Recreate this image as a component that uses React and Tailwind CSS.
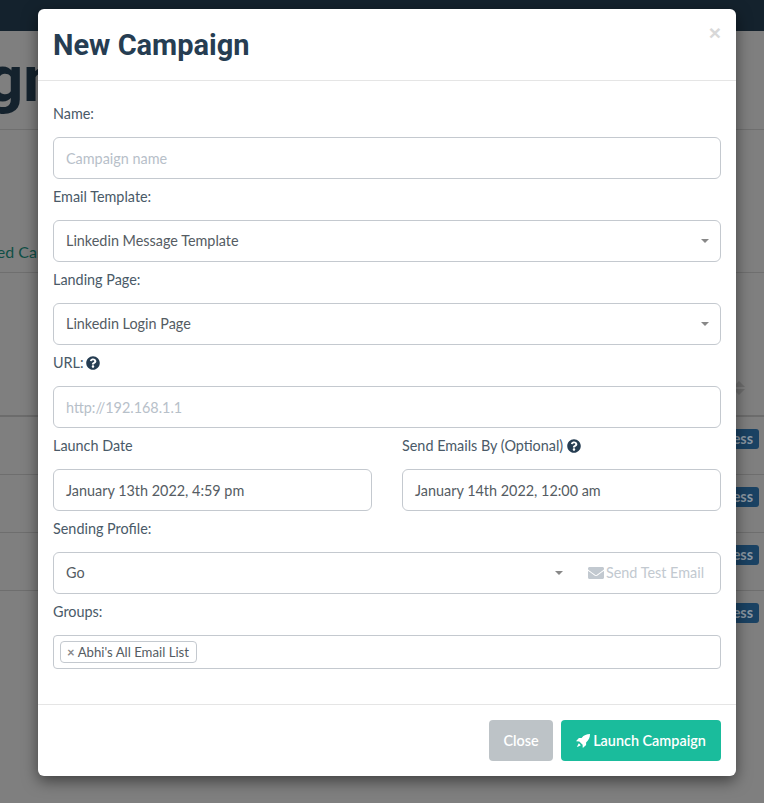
import React from "react";
import { FaEnvelope, FaQuestionCircle } from "react-icons/fa";

const font = "font-['Lato','Noto_Sans',sans-serif]";
const box = "h-[42px] w-full rounded-[6px] border border-[#c4c9cf] bg-white px-3 flex items-center text-[14.4px]";

function Label({ children, className = "" }) {
  return <div className={"h-[24px] mb-[11px] flex items-center gap-1 text-[14.4px] text-[#4a5a68] " + className}>{children}</div>;
}
function Caret({ tight }) {
  return <span className={"ml-auto h-0 w-0 border-x-[4px] border-t-[4px] border-x-transparent border-t-[#888888] " + (tight ? "mr-[-3px]" : "mr-[-1px]")} />;
}
function Field({ label, value, placeholder, select }) {
  return (
    <div>
      <Label>{label}</Label>
      <div className={box + " " + (select ? "pb-[1px] " : "pt-[2px] ") + (placeholder ? "text-[#b7c0c9]" : "text-[#555c63]")}>
        <span>{placeholder || value}</span>
        {select && <Caret />}
      </div>
    </div>
  );
}

function BackRow({ last }) {
  return (
    <div className={"flex h-[58px] justify-end pr-[5px] items-start " + (last ? "" : "border-b border-[#6e6e6e]")}>
      <span className="mt-[12px] rounded-[3px] bg-[#1a4263] pl-[20px] pr-[6px] pb-[1px] h-[20px] flex items-center text-[14.4px] font-bold text-[#8a97a2]">ess</span>
    </div>
  );
}

function Rocket({ className = "" }) {
  return (
    <svg viewBox="0 0 14 14" className={className} fill="currentColor">
      <path d="M14 0C10.6 0 7.9 1.1 5.6 3.9H2.9L0.2 6.9c-0.1 0.2 0 0.4 0.2 0.4l2.9 0.1L6.6 10.7l0.1 2.9c0 0.2 0.2 0.3 0.4 0.2l3-2.7V8.4C12.9 6.1 14 3.4 14 0z" />
      <path d="M2.8 9.2 4.8 11.2 2.4 12.4 0.9 13.1 1.6 11.6z" />
    </svg>
  );
}

export default function App() {
  return (
    <div className={"relative h-[803px] w-[764px] overflow-hidden bg-[#7f7f7f] " + font}>
      <div className="h-[31px] bg-[#14222d]" />
      <div className="h-[99px] border-b border-[#6f6f6f] overflow-hidden">
        <div className="ml-[-232px] mt-[11px] font-['Roboto'] text-[64px] font-bold leading-[76px] text-[#14222d] whitespace-nowrap">Campaigns</div>
      </div>
      <div className="h-[143px] border-b border-[#6f6f6f] flex items-end pb-[8px] overflow-hidden">
        <span className="ml-[-48px] text-[16px] text-[#0f4f46] whitespace-nowrap">Archived Campaigns</span>
      </div>
      <div className="h-[144px] border-b-2 border-[#6c6c6c] flex justify-end items-end pb-[20px] pr-[19px]">
        <span className="flex flex-col gap-[2px]">
          <span className="h-0 w-0 border-x-[6px] border-b-[6px] border-x-transparent border-b-[#6e6e6e]" />
          <span className="h-0 w-0 border-x-[6px] border-t-[6px] border-x-transparent border-t-[#6e6e6e]" />
        </span>
      </div>
      <BackRow />
      <BackRow />
      <BackRow />
      <BackRow last />

      <div className="absolute left-[38px] top-[9px] w-[698px] h-[767px] rounded-[6px] bg-white shadow-[0_5px_15px_rgba(0,0,0,0.5)] flex flex-col">
        <div className="relative h-[72px] border-b border-[#e5e5e5] px-[15px] flex items-center">
          <h4 className="font-['Roboto'] text-[29px] font-bold text-[#263d52] leading-[36px] mt-[1px]">New Campaign</h4>
          <span className="absolute right-[15px] top-[13px] font-['Liberation_Sans'] text-[21px] leading-[21px] font-bold text-[#d8d8d8]">×</span>
        </div>
        <div className="flex-1 px-[15px] pt-[21px] flex flex-col gap-[6px]">
          <Field label="Name:" placeholder="Campaign name" />
          <Field label="Email Template:" value="Linkedin Message Template" select />
          <Field label="Landing Page:" value="Linkedin Login Page" select />
          <Field
            label={<>URL:<FaQuestionCircle className="text-[14px] text-[#263d52] ml-[-2px]" /></>}
            placeholder="http://192.168.1.1"
          />
          <div className="grid grid-cols-2 gap-[30px]">
            <Field label="Launch Date" value="January 13th 2022, 4:59 pm" />
            <Field
              label={<>Send Emails By (Optional) <FaQuestionCircle className="text-[14px] text-[#263d52]" /></>}
              value="January 14th 2022, 12:00 am"
            />
          </div>
          <div>
            <Label>Sending Profile:</Label>
            <div className="flex h-[42px] rounded-[6px] border border-[#c4c9cf] text-[14.4px]">
              <div className="flex-1 flex items-center px-3 pb-[1px] text-[#555c63]">
                <span>Go</span>
                <Caret tight />
              </div>
              <div className="w-[148px] flex items-center justify-center gap-[2px] text-[#c2c9d0]">
                <FaEnvelope className="text-[16px]" />
                <span>Send Test Email</span>
              </div>
            </div>
          </div>
          <div>
            <Label>Groups:</Label>
            <div className="h-[34px] rounded-[4px] border border-[#c4c9cf] px-[6px] flex items-center">
              <span className="h-[22px] rounded-[4px] border border-[#c4c9cf] pl-[6px] pr-[7px] pt-[1px] flex items-center gap-[3px] text-[13.2px] text-[#555c63]">
                <span className="text-[#8a8a8a] font-bold">×</span>
                Abhi's All Email List
              </span>
            </div>
          </div>
        </div>
        <div className="h-[72px] border-t border-[#e5e5e5] px-[15px] flex items-center justify-end gap-2">
          <button className="h-[41px] w-[64px] rounded-[4px] bg-[#bdc3c7] text-[14.4px] font-semibold text-white">Close</button>
          <button className="h-[41px] w-[160px] rounded-[4px] bg-[#1abc9c] text-[14.4px] font-semibold text-white flex items-center justify-center gap-[3px]">
            <Rocket className="w-[14px] h-[14px]" />
            Launch Campaign
          </button>
        </div>
      </div>
    </div>
  );
}
